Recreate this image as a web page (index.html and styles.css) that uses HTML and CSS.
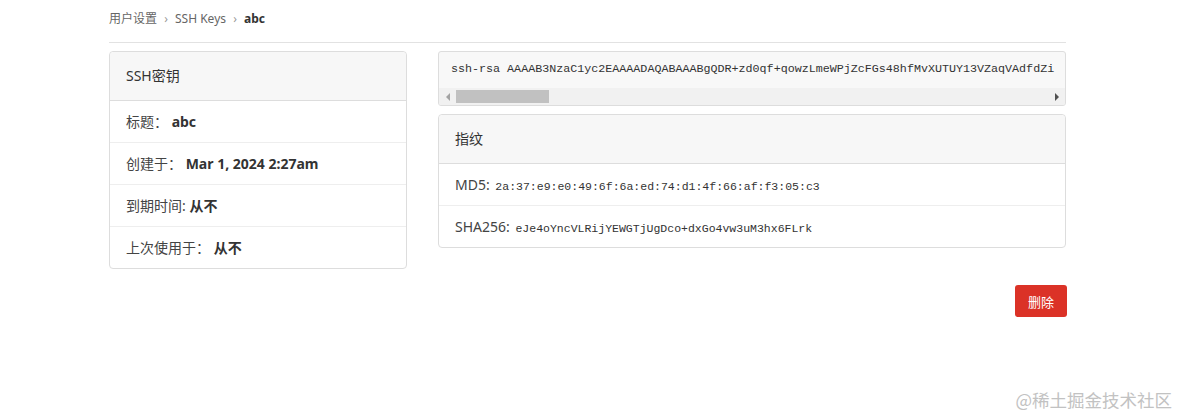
FILE: index.html
```html
<!DOCTYPE html>
<html lang="zh-CN">

<head>
	<meta charset="utf-8" />
	<meta name="viewport" content="width=device-width, initial-scale=1.0" />
	<title>SSH Keys - abc</title>
	<link rel="stylesheet" href="styles.css">
</head>

<body>
	<div class="page">
		<div class="crumbs">
			<span class="crumb">用户设置</span>
			<span class="sep">›</span>
			<span class="crumb">SSH Keys</span>
			<span class="sep">›</span>
			<span class="crumb current">abc</span>
		</div>

		<div class="cols">
			<div class="card info">
				<div class="card-head">SSH密钥</div>
				<div class="row">标题： <b>abc</b></div>
				<div class="row">创建于： <b>Mar 1, 2024 2:27am</b></div>
				<div class="row">到期时间: <b>从不</b></div>
				<div class="row">上次使用于： <b>从不</b></div>
			</div>

			<div class="side">
				<div class="keybox">
					<div class="keytext">ssh-rsa AAAAB3NzaC1yc2EAAAADAQABAAABgQDR+zd0qf+qowzLmeWPjZcFGs48hfMvXUTUY13VZaqVAdfdZi</div>
					<div class="hscroll">
						<span class="arrow left"></span>
						<span class="track"><span class="thumb"></span></span>
						<span class="arrow right"></span>
					</div>
				</div>

				<div class="card">
					<div class="card-head">指纹</div>
					<div class="row">MD5: <code>2a:37:e9:e0:49:6f:6a:ed:74:d1:4f:66:af:f3:05:c3</code></div>
					<div class="row">SHA256: <code>eJe4oYncVLRijYEWGTjUgDco+dxGo4vw3uM3hx6FLrk</code></div>
				</div>
			</div>
		</div>

		<div class="actions">
			<button class="btn-danger">删除</button>
		</div>
	</div>

	<div class="watermark">@稀土掘金技术社区</div>
</body>

</html>
```

FILE: styles.css
```css
body {
	margin: 0;
	background: #fff;
	color: #333;
	font-family: "Noto Sans", "Noto Sans CJK SC", sans-serif;
	font-size: 14px;
}

.page {
	width: 957px;
	margin-left: 109px;
}

.crumbs {
	padding: 10px 0 14px;
	line-height: 18px;
	font-size: 12px;
	color: #666;
	border-bottom: 1px solid #e2e2e2;
}

.sep {
	color: #999;
	margin: 0 4px;
}

.crumb.current {
	color: #333;
	font-weight: bold;
}

.cols {
	display: flex;
	gap: 31px;
	margin-top: 8px;
	align-items: flex-start;
}

.card {
	border: 1px solid #ddd;
	border-radius: 4px;
	background: #fff;
}

.info {
	width: 296px;
}

.side {
	flex: 1;
	display: flex;
	flex-direction: column;
	gap: 8px;
	min-width: 0;
}

.card-head {
	height: 48px;
	line-height: 48px;
	padding: 0 16px;
	background: #f7f7f7;
	border-bottom: 1px solid #ddd;
	border-radius: 4px 4px 0 0;
}

.row {
	height: 41px;
	line-height: 41px;
	padding: 0 16px;
	border-bottom: 1px solid #eee;
	color: #444;
	white-space: nowrap;
}

.row:last-child {
	border-bottom: none;
}

.row b {
	color: #333;
}

code {
	font-family: "Liberation Mono", "DejaVu Sans Mono", monospace;
	font-size: 11.5px;
	color: #333;
	margin-left: 2px;
}

.keybox {
	border: 1px solid #ddd;
	border-radius: 3px;
	background: #f8f8f8;
	overflow: hidden;
}

.keytext {
	padding: 8px 12px 10px;
	line-height: 18px;
	font-family: "Liberation Mono", "DejaVu Sans Mono", monospace;
	font-size: 11.7px;
	color: #333;
	white-space: nowrap;
	overflow: hidden;
}

.hscroll {
	display: flex;
	align-items: center;
	height: 17px;
	background: #f1f1f1;
}

.arrow {
	width: 17px;
	height: 17px;
	display: flex;
	align-items: center;
	justify-content: center;
}

.arrow::before {
	content: "";
	border-top: 4px solid transparent;
	border-bottom: 4px solid transparent;
}

.arrow.left::before {
	border-right: 4px solid #a3a3a3;
}

.arrow.right::before {
	border-left: 4px solid #505050;
}

.track {
	flex: 1;
	height: 17px;
	display: flex;
	align-items: center;
}

.thumb {
	width: 93px;
	height: 13px;
	background: #c1c1c1;
}

.actions {
	display: flex;
	justify-content: flex-end;
	margin-top: 16px;
	margin-right: -1px;
}

.btn-danger {
	width: 52px;
	height: 32px;
	border: none;
	border-radius: 3px;
	background: #db3227;
	color: #fff;
	font-family: inherit;
	font-size: 13px;
	padding: 0;
}

.watermark {
	position: absolute;
	right: 7px;
	top: 389px;
	font-size: 17.5px;
	line-height: 22px;
	color: #c2c2c2;
	font-family: "Noto Sans CJK SC", sans-serif;
}
```
